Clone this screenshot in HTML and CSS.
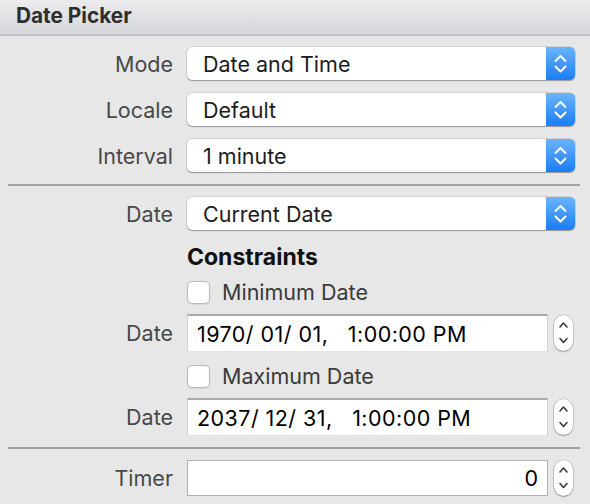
FILE: index.html
```html
<!DOCTYPE html>
<html>
<head>
<meta charset="utf-8">
<link rel="stylesheet" href="styles.css">
</head>
<body>
<div class="panel">
  <div class="header"><span class="title">Date Picker</span></div>

  <div class="section first">
    <div class="row popup-row">
      <span class="label">Mode</span>
      <div class="popup"><span class="ptext">Date and Time</span><span class="pbtn"><svg width="29" height="33" viewBox="0 0 29 33"><path d="M9.5 14 L14.5 9 L19.5 14 M9.5 19.5 L14.5 24.5 L19.5 19.5" fill="none" stroke="#fff" stroke-width="2" stroke-linecap="round" stroke-linejoin="round"/></svg></span></div>
    </div>
    <div class="row popup-row gap13">
      <span class="label">Locale</span>
      <div class="popup"><span class="ptext">Default</span><span class="pbtn"><svg width="29" height="33" viewBox="0 0 29 33"><path d="M9.5 14 L14.5 9 L19.5 14 M9.5 19.5 L14.5 24.5 L19.5 19.5" fill="none" stroke="#fff" stroke-width="2" stroke-linecap="round" stroke-linejoin="round"/></svg></span></div>
    </div>
    <div class="row popup-row gap13">
      <span class="label">Interval</span>
      <div class="popup"><span class="ptext">1 minute</span><span class="pbtn"><svg width="29" height="33" viewBox="0 0 29 33"><path d="M9.5 14 L14.5 9 L19.5 14 M9.5 19.5 L14.5 24.5 L19.5 19.5" fill="none" stroke="#fff" stroke-width="2" stroke-linecap="round" stroke-linejoin="round"/></svg></span></div>
    </div>
  </div>

  <div class="sep"></div>

  <div class="section second">
    <div class="row popup-row">
      <span class="label">Date</span>
      <div class="popup"><span class="ptext">Current Date</span><span class="pbtn"><svg width="29" height="33" viewBox="0 0 29 33"><path d="M9.5 14 L14.5 9 L19.5 14 M9.5 19.5 L14.5 24.5 L19.5 19.5" fill="none" stroke="#fff" stroke-width="2" stroke-linecap="round" stroke-linejoin="round"/></svg></span></div>
    </div>
    <div class="row text-row constraints-row">
      <span class="label"></span>
      <span class="heading">Constraints</span>
    </div>
    <div class="row text-row check-row">
      <span class="label"></span>
      <span class="check"></span><span class="check-text">Minimum Date</span>
    </div>
    <div class="row field-row">
      <span class="label">Date</span>
      <div class="field date-field"><span class="ftext">1970/ 01/ 01,   1:00:00 PM</span></div>
      <span class="stepper"><svg width="19" height="36" viewBox="0 0 19 36"><path d="M6 12 L9.5 8 L13 12 M6 23.5 L9.5 27.5 L13 23.5" fill="none" stroke="#3a3a3a" stroke-width="1.6" stroke-linecap="round" stroke-linejoin="round"/></svg></span>
    </div>
    <div class="row text-row check-row2">
      <span class="label"></span>
      <span class="check"></span><span class="check-text">Maximum Date</span>
    </div>
    <div class="row field-row field2">
      <span class="label">Date</span>
      <div class="field date-field"><span class="ftext">2037/ 12/ 31,   1:00:00 PM</span></div>
      <span class="stepper"><svg width="19" height="36" viewBox="0 0 19 36"><path d="M6 12 L9.5 8 L13 12 M6 23.5 L9.5 27.5 L13 23.5" fill="none" stroke="#3a3a3a" stroke-width="1.6" stroke-linecap="round" stroke-linejoin="round"/></svg></span>
    </div>
  </div>

  <div class="sep sep2"></div>

  <div class="section third">
    <div class="row field-row timer-row">
      <span class="label">Timer</span>
      <div class="field timer-field"><span class="ftext">0</span></div>
      <span class="stepper"><svg width="19" height="36" viewBox="0 0 19 36"><path d="M6 12 L9.5 8 L13 12 M6 23.5 L9.5 27.5 L13 23.5" fill="none" stroke="#3a3a3a" stroke-width="1.6" stroke-linecap="round" stroke-linejoin="round"/></svg></span>
    </div>
  </div>
</div>
</body>
</html>
```

FILE: styles.css
```css
html, body {
  margin: 0;
  padding: 0;
}
body {
  background: #e7e7e7;
  font-family: Inter, "Noto Sans", "Liberation Sans", sans-serif;
  font-size: 21.5px;
  width: 590px;
  height: 504px;
  overflow: hidden;
}
.panel {
  display: flex;
  flex-direction: column;
}
.header {
  height: 34px;
  box-sizing: border-box;
  padding-bottom: 3px;
  background: linear-gradient(#ececee, #d7d7db);
  border-bottom: 2px solid #c2c2c6;
  display: flex;
  align-items: center;
  padding-left: 16px;
}
.header {
  height: 36px;
}
.title {
  font-weight: 700;
  color: #2e2e2e;
  font-size: 20.8px;
}
.section {
  display: flex;
  flex-direction: column;
  padding-right: 15px;
}
.section.first { padding-top: 11px; }
.section.second { padding-top: 11px; }
.section.third { padding-top: 11px; }
.row {
  display: flex;
  align-items: center;
}
.label {
  width: 173px;
  flex: none;
  text-align: right;
  color: #484848;
  margin-right: 14px;
}
.popup-row { height: 33px; }
.gap13 { margin-top: 13px; }
.popup {
  flex: 1;
  height: 33px;
  display: flex;
  align-items: center;
  background: #fff;
  border-radius: 5px;
  box-shadow: 0 0 0 0.5px rgba(0,0,0,0.18), 0 1px 1px rgba(0,0,0,0.28);
  overflow: hidden;
}
.ptext {
  flex: 1;
  padding-left: 16px;
  color: #1c1c1c;
}
.pbtn {
  width: 29px;
  height: 33px;
  flex: none;
  background: linear-gradient(#6ab4fb, #1b7df6);
  display: flex;
}
.text-row { height: 24px; }
.constraints-row { margin-top: 15px; }
.heading {
  font-weight: 700;
  color: #111;
  font-size: 23px;
}
.check-row { margin-top: 11px; }
.check-row2 { margin-top: 12px; }
.check {
  width: 21px;
  height: 21px;
  flex: none;
  background: #fff;
  border: 1px solid #b9b9b9;
  border-radius: 5px;
  box-shadow: 0 1px 1px rgba(0,0,0,0.08);
  margin-right: 12px;
}
.check-text {
  color: #3a3a3a;
}
.field-row { height: 38px; margin-top: 10px; }
.field2 { margin-top: 10px; }
.field {
  flex: 1;
  background: #fff;
  display: flex;
  align-items: center;
  box-sizing: border-box;
}
.date-field {
  height: 38px;
  border-top: 2px solid #a9a9a9;
  border-left: 1px solid #d3d3d3;
  border-right: 1px solid #d3d3d3;
  border-bottom: 1px solid #e4e4e4;
  padding-left: 9px;
}
.date-field .ftext {
  letter-spacing: 0.45px;
}
.ftext {
  white-space: pre;
  color: #000;
}
.stepper {
  width: 19px;
  height: 36px;
  flex: none;
  margin-left: 6px;
  margin-right: 2px;
  box-sizing: border-box;
  background: #fff;
  border-radius: 10px;
  box-shadow: 0 0 0 0.5px rgba(0,0,0,0.25), 0 1px 1.5px rgba(0,0,0,0.25);
  display: flex;
}
.sep {
  height: 2px;
  background: #a3a3a3;
  margin: 12px 10px 0 8px;
}
.sep2 { margin-top: 11px; }
.timer-row { height: 36px; margin-top: 0; }
.timer-field {
  height: 36px;
  border: 1px solid #b0b0b0;
  justify-content: flex-end;
  padding-right: 9px;
}
```
